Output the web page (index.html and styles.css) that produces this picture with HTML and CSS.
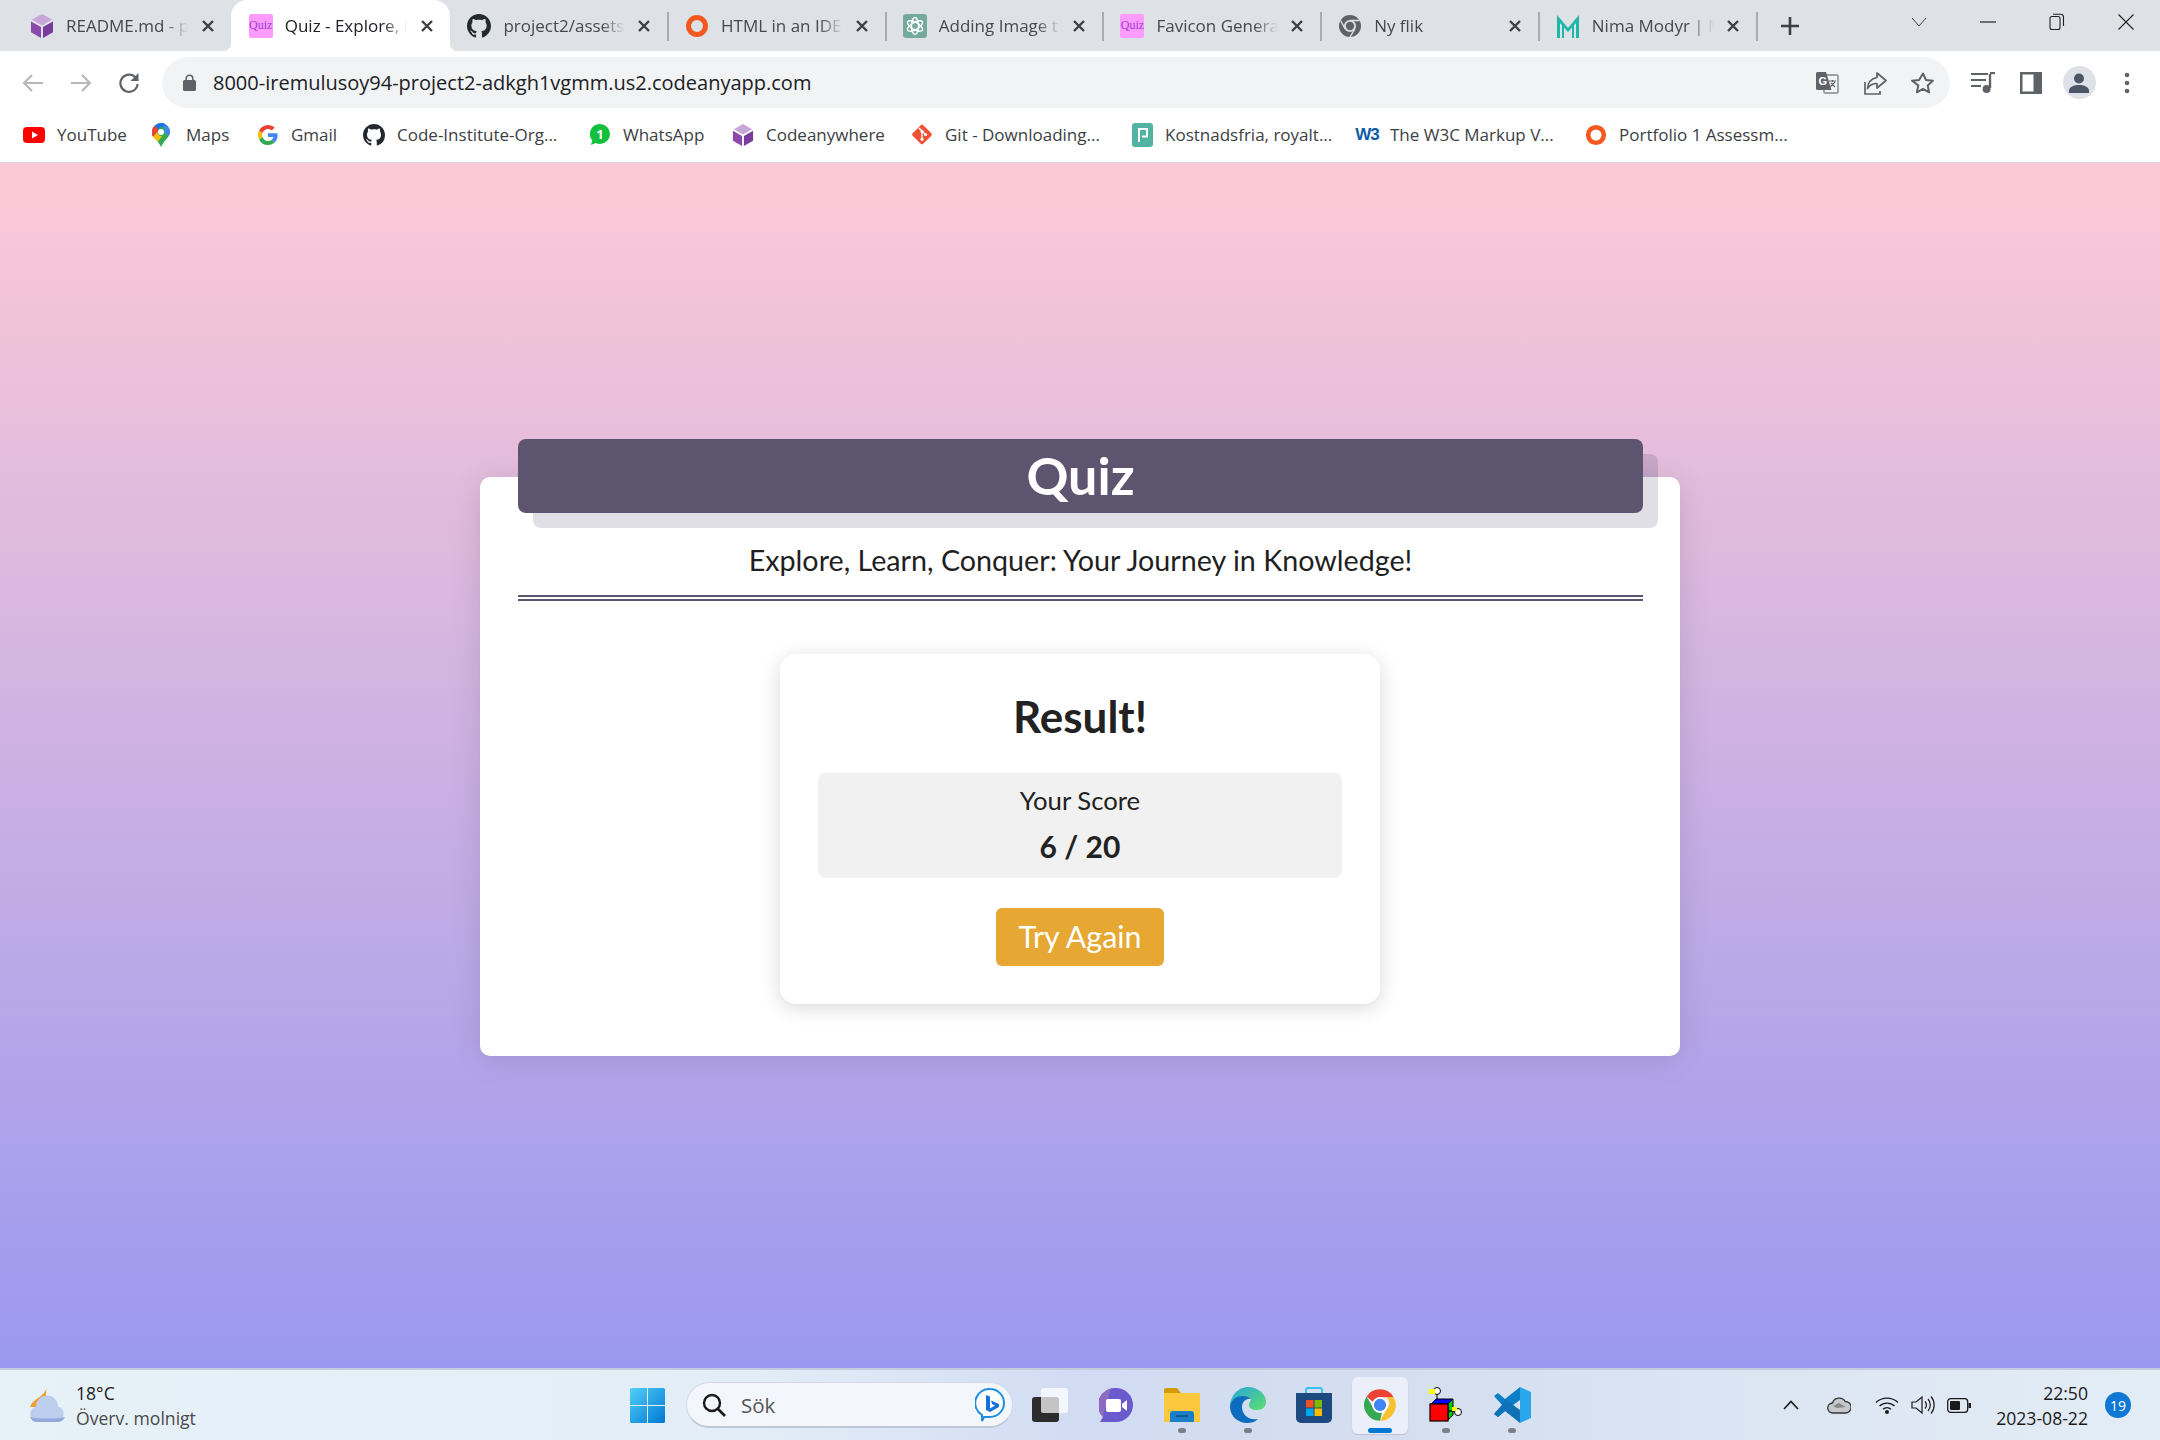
FILE: index.html
```html
<!DOCTYPE html>
<html lang="en">
<head>
    <meta charset="UTF-8">
    <meta name="viewport" content="width=device-width, initial-scale=1.0">
    <title>Quiz - Explore, Learn, Conquer</title>
    <link rel="stylesheet" href="styles.css">
</head>
<body>
    <svg class="defs" width="0" height="0">
        <symbol id="cube" viewBox="0 0 24 24">
            <polygon points="12,0 22,5.6 12,11.4 2,5.6" fill="#c9a6d9"/>
            <polygon points="1,7.4 11,13 11,24 1,18.2" fill="#8b4aa9"/>
            <polygon points="23,7.4 13,13 13,24 23,18.2" fill="#783c9c"/>
        </symbol>
        <symbol id="github" viewBox="0 0 16 16">
            <path fill="#24292f" d="M8 0C3.58 0 0 3.58 0 8c0 3.54 2.29 6.53 5.47 7.59.4.07.55-.17.55-.38 0-.19-.01-.82-.01-1.49-2.01.37-2.53-.49-2.69-.94-.09-.23-.48-.94-.82-1.13-.28-.15-.68-.52-.01-.53.63-.01 1.08.58 1.23.82.72 1.21 1.87.87 2.33.66.07-.52.28-.87.51-1.07-1.78-.2-3.64-.89-3.64-3.95 0-.87.31-1.59.82-2.15-.08-.2-.36-1.02.08-2.12 0 0 .67-.21 2.2.82.64-.18 1.32-.27 2-.27.68 0 1.36.09 2 .27 1.53-1.04 2.2-.82 2.2-.82.44 1.1.16 1.92.08 2.12.51.56.82 1.27.82 2.15 0 3.07-1.87 3.75-3.65 3.95.29.25.54.73.54 1.48 0 1.07-.01 1.93-.01 2.2 0 .21.15.46.55.38A8.013 8.013 0 0016 8c0-4.42-3.58-8-8-8z"/>
        </symbol>
        <symbol id="ring" viewBox="0 0 24 24">
            <circle cx="12" cy="12" r="8.5" fill="none" stroke="#f4581f" stroke-width="5"/>
        </symbol>
        <symbol id="close" viewBox="0 0 16 16">
            <path d="M3 3l10 10M13 3L3 13" stroke="#3c4043" stroke-width="2.4" fill="none"/>
        </symbol>
        <symbol id="chromelogo" viewBox="0 0 48 48">
            <path d="M24 3a21 21 0 0 1 18.2 10.5H24a10.5 10.5 0 0 0-9.6 6.3L6.2 12.5A21 21 0 0 1 24 3z" fill="#ea4335"/>
            <path d="M42.2 13.5A21 21 0 0 1 24 45l9.3-15.8a10.5 10.5 0 0 0-.6-15.7z" fill="#fbc02d"/>
            <path d="M6.2 12.5l9.2 16a10.5 10.5 0 0 0 11.4 5.1L24 45A21 21 0 0 1 6.2 12.5z" fill="#34a853"/>
            <circle cx="24" cy="24" r="10.5" fill="#fff"/>
            <circle cx="24" cy="24" r="8.2" fill="#4285f4"/>
        </symbol>
    </svg>

    <div class="tabstrip">
        <div class="tab">
            <svg class="favicon" width="24" height="24"><use href="#cube"/></svg>
            <span class="tab-title">README.md - p</span>
            <svg class="tab-close" width="16" height="16"><use href="#close"/></svg>
        </div>
        <div class="tab active">
            <span class="favicon quiz-icon">Quiz</span>
            <span class="tab-title">Quiz - Explore, l</span>
            <svg class="tab-close" width="16" height="16"><use href="#close"/></svg>
        </div>
        <div class="tab sep">
            <svg class="favicon" width="24" height="24"><use href="#github"/></svg>
            <span class="tab-title">project2/assets</span>
            <svg class="tab-close" width="16" height="16"><use href="#close"/></svg>
        </div>
        <div class="tab sep">
            <svg class="favicon" width="24" height="24"><use href="#ring"/></svg>
            <span class="tab-title">HTML in an IDE</span>
            <svg class="tab-close" width="16" height="16"><use href="#close"/></svg>
        </div>
        <div class="tab sep">
            <svg class="favicon" width="24" height="24" viewBox="0 0 24 24">
                <rect width="24" height="24" rx="3" fill="#74aa9c"/>
                <g fill="none" stroke="#fff" stroke-width="1.4">
                    <ellipse cx="12" cy="12" rx="3.6" ry="8.5"/>
                    <ellipse cx="12" cy="12" rx="3.6" ry="8.5" transform="rotate(60 12 12)"/>
                    <ellipse cx="12" cy="12" rx="3.6" ry="8.5" transform="rotate(120 12 12)"/>
                </g>
            </svg>
            <span class="tab-title">Adding Image t</span>
            <svg class="tab-close" width="16" height="16"><use href="#close"/></svg>
        </div>
        <div class="tab sep">
            <span class="favicon quiz-icon">Quiz</span>
            <span class="tab-title">Favicon Genera</span>
            <svg class="tab-close" width="16" height="16"><use href="#close"/></svg>
        </div>
        <div class="tab sep">
            <svg class="favicon" width="24" height="24" viewBox="0 0 24 24">
                <circle cx="12" cy="12" r="11" fill="#5f6368"/>
                <path d="M12 6.5h9.5M16.8 15L12 23M7.2 15L2.5 6.5" stroke="#dee1e6" stroke-width="1.4"/>
                <circle cx="12" cy="12" r="6" fill="#dee1e6"/>
                <circle cx="12" cy="12" r="4.2" fill="#5f6368"/>
            </svg>
            <span class="tab-title">Ny flik</span>
            <svg class="tab-close" width="16" height="16"><use href="#close"/></svg>
        </div>
        <div class="tab sep">
            <svg class="favicon" width="24" height="24" viewBox="0 0 24 24">
                <path d="M1 24V1l11 13L23 1v23h-3V9l-8 9-8-9v15z" fill="#1cb8a5"/>
                <path d="M7 24V11M17 24V11" stroke="#1cb8a5" stroke-width="2"/>
            </svg>
            <span class="tab-title">Nima Modyr | M</span>
            <svg class="tab-close" width="16" height="16"><use href="#close"/></svg>
        </div>
        <div class="new-tab">
            <svg width="18" height="18" viewBox="0 0 18 18"><path d="M9 0v18M0 9h18" stroke="#3c4043" stroke-width="2.6"/></svg>
        </div>
        <div class="win-chevron">
            <svg width="16" height="10" viewBox="0 0 16 10"><path d="M1 1l7 8 7-8" fill="none" stroke="#3c4043"/></svg>
        </div>
        <div class="win-btn">
            <svg width="16" height="2" viewBox="0 0 16 2"><path d="M0 1h16" stroke="#222" stroke-width="1.2"/></svg>
        </div>
        <div class="win-btn">
            <svg width="16" height="18" viewBox="0 0 16 18"><rect x="1" y="3.5" width="10" height="13" rx="2" fill="none" stroke="#222" stroke-width="1.1"/><path d="M4 1.2h7.5A3 3 0 0 1 14.5 4v9" fill="none" stroke="#222" stroke-width="1.1"/></svg>
        </div>
        <div class="win-btn">
            <svg width="16" height="16" viewBox="0 0 16 16"><path d="M.5.5l15 15M15.5.5l-15 15" stroke="#222" stroke-width="1.1"/></svg>
        </div>
    </div>

    <div class="toolbar">
        <div class="tool-btn">
            <svg width="22" height="20" viewBox="0 0 22 20"><path d="M21 10H3M10 2l-8 8 8 8" fill="none" stroke="#b6b8bb" stroke-width="2.2"/></svg>
        </div>
        <div class="tool-btn">
            <svg width="22" height="20" viewBox="0 0 22 20"><path d="M1 10h18M12 2l8 8-8 8" fill="none" stroke="#b6b8bb" stroke-width="2.2"/></svg>
        </div>
        <div class="tool-btn">
            <svg width="22" height="22" viewBox="0 0 22 22"><path d="M18.2 6.5A8.6 8.6 0 1 0 19.6 12" fill="none" stroke="#5f6368" stroke-width="2.2"/><path d="M20.5 1v8h-8z" fill="#5f6368"/></svg>
        </div>
        <div class="omnibox">
            <svg class="lock" width="13" height="17" viewBox="0 0 13 17"><path d="M3.2 7V4.6a3.3 3.3 0 0 1 6.6 0V7" fill="none" stroke="#5f6368" stroke-width="1.6"/><rect y="6" width="13" height="11" rx="1.6" fill="#5f6368"/></svg>
            <span class="url">8000-iremulusoy94-project2-adkgh1vgmm.us2.codeanyapp.com</span>
            <div class="omni-actions">
                <div class="tool-btn">
                    <svg width="24" height="24" viewBox="0 0 24 24"><rect x="9" y="4" width="14" height="18" rx="1" fill="#f1f3f4" stroke="#80868b" stroke-width="1.4"/><path d="M1 2.5A1.5 1.5 0 0 1 2.5 1H11l5.5 18H2.5A1.5 1.5 0 0 1 1 17.5z" fill="#5f6368"/><text x="3.5" y="14" class="g-letter">G</text><path d="M14 10h7M17.5 9v2M15 16l5-5M16 12l4 4" stroke="#5f6368" stroke-width="1.1"/></svg>
                </div>
                <div class="tool-btn">
                    <svg width="24" height="24" viewBox="0 0 24 24"><path d="M2 11v12h15v-3" fill="none" stroke="#5f6368" stroke-width="1.7"/><path d="M14 2l9 7.5-9 7.5v-4.5c-4 0-7 1-9.5 5 .5-6 4-10 9.5-11z" fill="none" stroke="#5f6368" stroke-width="1.7" stroke-linejoin="round"/></svg>
                </div>
                <div class="tool-btn">
                    <svg width="24" height="24" viewBox="0 0 24 24"><path d="M12 2.5l2.9 6.4 7 .8-5.2 4.7 1.4 6.9-6.1-3.5-6.1 3.5 1.4-6.9L1.1 9.7l7-.8z" fill="none" stroke="#5f6368" stroke-width="2" stroke-linejoin="round"/></svg>
                </div>
            </div>
        </div>
        <div class="tool-btn">
            <svg width="24" height="22" viewBox="0 0 24 22"><path d="M0 2h17M0 8h15M0 14h10" stroke="#5f6368" stroke-width="2.2"/><path d="M19 2v14" stroke="#5f6368" stroke-width="2.4"/><path d="M19 1h5" stroke="#5f6368" stroke-width="2.4"/><circle cx="15.6" cy="17" r="4" fill="#5f6368"/></svg>
        </div>
        <div class="tool-btn">
            <svg width="22" height="22" viewBox="0 0 22 22"><path d="M0 0h22v22H0z" fill="#5f6368"/><path d="M2.5 2.5h11v17h-11z" fill="#fff"/></svg>
        </div>
        <div class="tool-btn">
            <div class="avatar">
                <svg width="20" height="20" viewBox="0 0 20 20"><circle cx="10" cy="5.5" r="5" fill="#4a5568"/><path d="M0 20v-2.5C0 14 5 12 10 12s10 2 10 5.500V20z" fill="#4a5568"/></svg>
            </div>
        </div>
        <div class="tool-btn">
            <svg width="6" height="22" viewBox="0 0 6 22"><circle cx="3" cy="3" r="2.300" fill="#5f6368"/><circle cx="3" cy="11" r="2.300" fill="#5f6368"/><circle cx="3" cy="19" r="2.300" fill="#5f6368"/></svg>
        </div>
    </div>

    <div class="bookmarks">
        <div class="bookmark">
            <span class="mark-icon"><svg width="22" height="16" viewBox="0 0 22 16"><rect width="22" height="16" rx="4" fill="#f00"/><path d="M9 4.500l6 3.500-6 3.500z" fill="#fff"/></svg></span>
            <span>YouTube</span>
        </div>
        <div class="bookmark">
            <span class="mark-icon maps"><svg width="18" height="24" viewBox="0 0 18 24"><path d="M9 0a9 9 0 0 1 9 9c0 4-4 7-6 10-1 1.500-2 3-3 5-1-2-2-3.500-3-5C4 16 0 13 0 9a9 9 0 0 1 9-9z" fill="#34a853"/><path d="M9 0a9 9 0 0 1 9 9c0 1.500-.5 2.800-1.300 4L12 9a3 3 0 0 0-1-5l2.500-2.800A9 9 0 0 0 9 0z" fill="#4285f4"/><path d="M9 0a9 9 0 0 0-6.500 2.800L6.800 7A3 3 0 0 1 11 4l2.500-2.800A9 9 0 0 0 9 0z" fill="#1a73e8"/><path d="M2.500 2.800A9 9 0 0 0 1 14l5.800-7z" fill="#ea4335"/><path d="M1 14l5.800-7A3 3 0 0 0 11 12l-4.800 6.500C4.500 16.500 2.200 15.500 1 14z" fill="#fbbc04"/><circle cx="9" cy="9" r="3" fill="#fff"/></svg></span>
            <span>Maps</span>
        </div>
        <div class="bookmark">
            <span class="mark-icon"><svg width="20" height="20" viewBox="0 0 20 20"><path d="M19.600 10.200c0-.7-.1-1.300-.2-2H10v3.800h5.400a4.600 4.600 0 0 1-2 3l3.200 2.500c1.900-1.700 3-4.300 3-7.300z" fill="#4285f4"/><path d="M10 20c2.700 0 4.900-.9 6.600-2.500l-3.200-2.500c-.9.600-2 1-3.400 1-2.600 0-4.800-1.800-5.600-4.100L1.100 14.400A10 10 0 0 0 10 20z" fill="#34a853"/><path d="M4.400 11.900a6 6 0 0 1 0-3.800L1.100 5.600a10 10 0 0 0 0 8.800z" fill="#fbbc05"/><path d="M10 4c1.500 0 2.800.5 3.800 1.500l2.900-2.900A10 10 0 0 0 1.100 5.600l3.300 2.500C5.200 5.800 7.400 4 10 4z" fill="#ea4335"/></svg></span>
            <span>Gmail</span>
        </div>
        <div class="bookmark">
            <span class="mark-icon"><svg width="24" height="24"><use href="#github"/></svg></span>
            <span>Code-Institute-Org...</span>
        </div>
        <div class="bookmark">
            <span class="mark-icon"><svg width="20" height="22" viewBox="0 0 20 22"><path d="M10 0a10 10 0 0 1 0 20c-1.500 0-3-.4-4.300-1L1 21l1.300-4.500A10 10 0 0 1 10 0z" fill="#13c13e"/><text x="10" y="15" class="wa-num">1</text></svg></span>
            <span>WhatsApp</span>
        </div>
        <div class="bookmark">
            <span class="mark-icon"><svg width="24" height="24"><use href="#cube"/></svg></span>
            <span>Codeanywhere</span>
        </div>
        <div class="bookmark">
            <span class="mark-icon"><svg width="25" height="25" viewBox="0 0 25 25"><rect x="4" y="4" width="17" height="17" rx="2" transform="rotate(45 12.500 12.500)" fill="#f05133"/><path d="M9 5l7 7M12.500 9v9" stroke="#fff" stroke-width="1.600"/><circle cx="12.500" cy="9" r="1.800" fill="#fff"/><circle cx="12.500" cy="18" r="1.800" fill="#fff"/><circle cx="16.500" cy="12.500" r="1.800" fill="#fff"/></svg></span>
            <span>Git - Downloading...</span>
        </div>
        <div class="bookmark">
            <span class="mark-icon"><svg width="21" height="24" viewBox="0 0 21 24"><rect width="21" height="24" rx="3" fill="#52b3a2"/><path d="M7 19V6h8v7.500h-5" fill="none" stroke="#fff" stroke-width="2"/></svg></span>
            <span>Kostnadsfria, royalt...</span>
        </div>
        <div class="bookmark">
            <span class="mark-icon w3">W3</span>
            <span>The W3C Markup V...</span>
        </div>
        <div class="bookmark">
            <span class="mark-icon"><svg width="24" height="24"><use href="#ring"/></svg></span>
            <span>Portfolio 1 Assessm...</span>
        </div>
    </div>

    <main class="page">
        <section class="quiz-card">
            <header class="quiz-header">
                <h1>Quiz</h1>
            </header>
            <p class="tagline">Explore, Learn, Conquer: Your Journey in Knowledge!</p>
            <div class="result-card">
                <h2>Result!</h2>
                <div class="score-box">
                    <p class="score-label">Your Score</p>
                    <p class="score-value">6 / 20</p>
                </div>
                <button class="retry-btn">Try Again</button>
            </div>
        </section>
    </main>

    <footer class="taskbar">
        <div class="weather">
            <svg width="37" height="35" viewBox="0 0 37 35">
                <path d="M18 0c-2 6-1 10 2 13l-8 6H1C3 11 14 10 18 0z" fill="#f0a030"/>
                <ellipse cx="19" cy="18" rx="8" ry="7" fill="#8fa6d8"/>
                <path d="M8 34a8 8 0 0 1-1-15.500 10.500 10.500 0 0 1 22 0A8 8 0 0 1 28 34z" fill="#bccdee"/>
                <path d="M1 29c8 2 27 2 35 0-2 4-4 5-8 5H8c-3 0-5-1-7-5z" fill="#94a8dc"/>
            </svg>
            <div class="weather-text">
                <span class="temp">18°C</span>
                <span class="cond">Överv. molnigt</span>
            </div>
        </div>
        <svg class="win-logo" width="35" height="35" viewBox="0 0 35 35">
            <defs>
                <linearGradient id="winblue" x1="0" y1="0" x2="1" y2="1">
                    <stop offset="0" stop-color="#52d0f5"/>
                    <stop offset="1" stop-color="#0078d4"/>
                </linearGradient>
            </defs>
            <path d="M0 1.500A1.500 1.500 0 0 1 1.500 0H17v17H0zM18 0h15.500A1.500 1.500 0 0 1 35 1.500V17H18zM0 18h17v17H1.500A1.500 1.500 0 0 1 0 33.500zM18 18h17v15.500a1.500 1.500 0 0 1-1.500 1.500H18z" fill="url(#winblue)"/>
        </svg>
        <div class="search">
            <svg width="24" height="24" viewBox="0 0 24 24"><circle cx="10" cy="10" r="8" fill="none" stroke="#1a1a1a" stroke-width="2.400"/><path d="M15.500 15.500L23 23" stroke="#1a1a1a" stroke-width="2.600"/></svg>
            <span class="search-text">Sök</span>
            <svg class="bing" width="30" height="34" viewBox="0 0 30 34">
                <path d="M15 1a14 14 0 0 1 0 28H9l-2 4v-6A14 14 0 0 1 15 1z" fill="#fff" stroke="#1b8fe0" stroke-width="2"/>
                <path d="M11 7l4 1.500v12l5-3-3-1.500-1-3.500 8 3.500v3l-9 5-4-2z" fill="#1570d8"/>
            </svg>
        </div>
        <div class="tasks">
            <div class="task">
                <svg width="36" height="34" viewBox="0 0 36 34">
                    <rect y="9" width="27" height="25" rx="3" fill="#2c2c2c"/>
                    <rect x="9" y="0" width="27" height="25" rx="2" fill="#fff" fill-opacity=".72"/>
                </svg>
            </div>
            <div class="task">
                <svg width="34" height="35" viewBox="0 0 34 35">
                    <path d="M17 0a17 17 0 0 1 0 34H1l3-5A17 17 0 0 1 17 0z" fill="#6a5acd"/>
                    <path d="M17 0A17 17 0 0 0 4 29l8-29z" fill="#8c6bc0"/>
                    <rect x="7" y="11" width="15" height="13" rx="2" fill="#fff"/>
                    <path d="M23 16l5-4v11l-5-4z" fill="#fff"/>
                </svg>
            </div>
            <div class="task dotted">
                <svg width="36" height="34" viewBox="0 0 36 34">
                    <path d="M0 2a2 2 0 0 1 2-2h11l4 5H0z" fill="#d49a0a"/>
                    <path d="M0 5h35a1 1 0 0 1 1 1v28H0z" fill="#fcc93e"/>
                    <path d="M6 34V26a3 3 0 0 1 3-3h18a3 3 0 0 1 3 3v8z" fill="#1a7fc8"/>
                    <path d="M12 28h12" stroke="#0b4f8a" stroke-width="1.600"/>
                </svg>
            </div>
            <div class="task dotted">
                <svg width="36" height="36" viewBox="0 0 36 36">
                    <defs>
                        <linearGradient id="edgetop" x1="0" y1="0" x2="1" y2="1">
                            <stop offset="0" stop-color="#2aa5e0"/>
                            <stop offset="1" stop-color="#5ce06a"/>
                        </linearGradient>
                    </defs>
                    <path d="M18 0c10 0 18 7 18 15 0 5-4 8-9 8-5 0-8-2-8-5 0-3 2-4 2-6-2-2-6-2-9 0C6 15 2 17 0 20 0 9 8 0 18 0z" fill="url(#edgetop)"/>
                    <path d="M0 20C1 12 7 9 13 9c5 0 8 3 8 3-5-1-9 3-9 8 0 7 6 14 16 12-3 3-7 4-11 4C8 36 0 29 0 20z" fill="#0c6cbd"/>
                </svg>
            </div>
            <div class="task">
                <svg width="36" height="36" viewBox="0 0 36 36">
                    <path d="M10 8V3a2 2 0 0 1 2-2h12a2 2 0 0 1 2 2v5" fill="none" stroke="#3ac0f0" stroke-width="2"/>
                    <path d="M0 6h36v25a5 5 0 0 1-5 5H5a5 5 0 0 1-5-5z" fill="#1c4a80"/>
                    <rect x="10" y="13" width="7.500" height="7.500" fill="#f25022"/>
                    <rect x="18.500" y="13" width="7.500" height="7.500" fill="#7fba00"/>
                    <rect x="10" y="21.500" width="7.500" height="7.500" fill="#00a4ef"/>
                    <rect x="18.500" y="21.500" width="7.500" height="7.500" fill="#ffb900"/>
                </svg>
            </div>
            <div class="task running">
                <svg width="36" height="36"><use href="#chromelogo"/></svg>
            </div>
            <div class="task dotted">
                <svg width="34" height="36" viewBox="0 0 34 36">
                    <path d="M8 4v12" stroke="#000" stroke-width="1"/>
                    <circle cx="8" cy="4" r="3.500" fill="#fff" stroke="#000" stroke-width="1"/>
                    <path d="M0 2h6v5H0z" fill="#ff0"/>
                    <path d="M2 17l5-5h17l-5 5z" fill="#00f" stroke="#000"/>
                    <path d="M19 17l5-5v16l-5 5z" fill="#0c0" stroke="#000"/>
                    <rect x="1" y="17" width="18" height="17" fill="#f00" stroke="#000" stroke-width="1.200"/>
                    <path d="M20 24h7" stroke="#000" stroke-width="1.500"/>
                    <circle cx="29" cy="25" r="3.500" fill="#fff" stroke="#000" stroke-width="1"/>
                    <path d="M23 20h5v4h-5z" fill="#ff0"/>
                </svg>
            </div>
            <div class="task dotted">
                <svg width="37" height="36" viewBox="0 0 37 36">
                    <path d="M26 0l11 5v26l-11 5z" fill="#2aa6ea"/>
                    <path d="M26 0v13L11 24l-7 6-4-3 8-9-8-9 4-3 7 6z" fill="#0a7fc8"/>
                    <path d="M37 5L26 13v10l11 8" fill="#2aa6ea"/>
                    <path d="M11 12l15 11v13L11 24 4 30l-4-3 8-9z" fill="#0e71b8"/>
                </svg>
            </div>
        </div>
        <div class="tray">
            <div class="tray-icon caret">
                <svg width="16" height="10" viewBox="0 0 16 10"><path d="M1 9l7-7.500L15 9" fill="none" stroke="#1a1a1a" stroke-width="1.600"/></svg>
            </div>
            <div class="tray-icon cloud">
                <svg width="24" height="17" viewBox="0 0 24 17"><path d="M6 16a5 5 0 0 1-.5-10 7 7 0 0 1 12.700-1.500A5.500 5.500 0 0 1 18.500 16z" fill="#c6c8cc" stroke="#333" stroke-width="1.300"/><path d="M6 9l6-3 7 4-9 1z" fill="#888"/></svg>
            </div>
            <div class="tray-icon">
                <svg width="24" height="18" viewBox="0 0 24 18"><path d="M1 6.500a16 16 0 0 1 22 0M4.500 10a11 11 0 0 1 15 0M8 13.300a6 6 0 0 1 8 0" fill="none" stroke="#1a1a1a" stroke-width="1.300"/><circle cx="12" cy="16" r="2" fill="#1a1a1a"/></svg>
            </div>
            <div class="tray-icon">
                <svg width="24" height="20" viewBox="0 0 24 20"><path d="M1 7h4l6-5v16l-6-5H1z" fill="none" stroke="#1a1a1a" stroke-width="1.200"/><path d="M14 6.500a5 5 0 0 1 0 7M17 4a9 9 0 0 1 0 12M20 1.500a13 13 0 0 1 0 17" fill="none" stroke="#1a1a1a" stroke-width="1.200"/></svg>
            </div>
            <div class="tray-icon">
                <svg width="24" height="15" viewBox="0 0 24 15"><rect x=".7" y=".7" width="20" height="13.600" rx="3" fill="none" stroke="#1a1a1a" stroke-width="1.300"/><rect x="3" y="3" width="10" height="9" rx="1" fill="#1a1a1a"/><rect x="21.500" y="5" width="2.500" height="5" fill="#1a1a1a"/></svg>
            </div>
            <div class="clock">
                <span>22:50</span>
                <span>2023-08-22</span>
            </div>
            <div class="badge">19</div>
        </div>
    </footer>
</body>
</html>
```

FILE: styles.css
```css
* {
    box-sizing: border-box;
}
html, body {
    margin: 0;
    padding: 0;
}
body {
    display: flex;
    flex-direction: column;
    width: 2160px;
    height: 1440px;
    overflow: hidden;
    font-family: "Open Sans", "Noto Sans", sans-serif;
    color: #202124;
    background: #fff;
}
.defs {
    display: block;
    height: 0;
}

/* browser tabs */
.tabstrip {
    display: flex;
    align-items: center;
    height: 51px;
    flex: none;
    padding-left: 13px;
    background: #dee1e6;
}
.tab {
    position: relative;
    display: flex;
    align-items: center;
    gap: 12px;
    width: 217.7px;
    height: 51px;
    flex: none;
    padding: 0 14px 0 19px;
    font-size: 17px;
    color: #45494e;
}
.tab:first-child {
    padding: 0 15px 0 17px;
}
.tab.sep::after {
    content: "";
    position: absolute;
    right: -3px;
    top: 12px;
    width: 2px;
    height: 29px;
    background: #a9adb2;
}
.tab.active {
    width: 219.7px;
    margin-right: -2px;
    padding: 0 15px 0 18px;
    color: #202124;
    background: #fff;
    border-radius: 16px 16px 0 0;
}
.tab.active::before,
.tab.active::after {
    content: "";
    position: absolute;
    bottom: 0;
    width: 8px;
    height: 8px;
}
.tab.active::before {
    left: -8px;
    background: radial-gradient(circle at 0 0, transparent 8px, #fff 8.5px);
}
.tab.active::after {
    right: -8px;
    background: radial-gradient(circle at 100% 0, transparent 8px, #fff 8.5px);
}
.favicon {
    flex: none;
}
.quiz-icon {
    display: flex;
    align-items: center;
    justify-content: center;
    width: 24px;
    height: 24px;
    border-radius: 2px;
    background: #fd9bff;
    color: #9a3fd0;
    font-family: "Liberation Serif", serif;
    font-size: 12px;
}
.tab-title {
    flex: 1;
    min-width: 0;
    overflow: hidden;
    white-space: nowrap;
    -webkit-mask-image: linear-gradient(to right, #000 98px, transparent 122px);
    mask-image: linear-gradient(to right, #000 98px, transparent 122px);
}
.tab-close {
    flex: none;
    margin-left: -12px;
}
.new-tab {
    display: flex;
    justify-content: center;
    width: 34px;
    margin-left: 18px;
}
.win-chevron {
    display: flex;
    justify-content: center;
    width: 34px;
    margin-left: auto;
    margin-right: 17px;
    margin-bottom: 8px;
}
.win-btn {
    display: flex;
    justify-content: center;
    align-items: center;
    width: 69px;
    margin-bottom: 8px;
}

/* address bar */
.toolbar {
    display: flex;
    align-items: center;
    height: 57px;
    flex: none;
    padding: 6px 9px 0;
    background: #fff;
}
.tool-btn {
    display: flex;
    align-items: center;
    justify-content: center;
    width: 48px;
    height: 48px;
    flex: none;
}
.omnibox {
    display: flex;
    align-items: center;
    width: 1788px;
    height: 51px;
    flex: none;
    margin: 0 9px;
    padding: 0 3px 0 21px;
    background: #f1f3f4;
    border-radius: 26px;
}
.lock {
    flex: none;
    margin-right: 17px;
}
.url {
    font-size: 20px;
    color: #202124;
}
.omni-actions {
    display: flex;
    margin-left: auto;
}
.g-letter {
    font-family: "Liberation Sans", sans-serif;
    font-size: 11px;
    font-weight: 700;
    fill: #fff;
}
.avatar {
    display: flex;
    align-items: center;
    justify-content: center;
    width: 33px;
    height: 33px;
    border-radius: 50%;
    background: #dee1e6;
}

/* bookmarks */
.bookmarks {
    display: grid;
    grid-template-columns: 129px 105px 106px 226px 143px 179px 220px 225px 229px 1fr;
    align-items: center;
    height: 55px;
    flex: none;
    padding: 0 0 1px 23px;
    border-bottom: 1px solid #d9dadd;
    font-size: 17px;
    color: #3c4043;
    background: #fff;
}
.bookmark {
    display: flex;
    align-items: center;
    gap: 12px;
    white-space: nowrap;
}
.mark-icon {
    display: flex;
    align-items: center;
    justify-content: center;
    width: 22px;
    height: 26px;
    flex: none;
}
.mark-icon.maps {
    justify-content: flex-start;
}
.wa-num {
    font-size: 13px;
    font-weight: 700;
    text-anchor: middle;
    fill: #fff;
}
.w3 {
    font-family: "Liberation Sans", sans-serif;
    font-size: 17px;
    font-weight: 700;
    letter-spacing: -1px;
    color: #0d5aa7;
}

/* quiz */
.page {
    flex: 1;
    display: flex;
    justify-content: center;
    align-items: flex-start;
    padding-top: 314px;
    background: linear-gradient(to bottom, #fdc9d6, #9a98f0);
}
.quiz-card {
    width: 1200px;
    height: 579px;
    padding: 0 38px;
    background: #fff;
    border-radius: 10px;
    box-shadow: 0 4px 30px rgba(0, 0, 0, 0.12);
    font-family: Lato, "Open Sans", sans-serif;
}
.quiz-header {
    height: 74px;
    margin-top: -38px;
    margin-right: -1px;
    background: #5d5470;
    border-radius: 8px;
    box-shadow: 15px 15px 0 rgba(40, 40, 80, 0.15);
}
.quiz-header h1 {
    margin: 0;
    font-size: 52px;
    font-weight: 700;
    line-height: 72px;
    text-align: center;
    color: #fff;
}
.tagline {
    margin: 0 -1px 53px 0;
    padding: 30px 0 18px;
    font-size: 28.7px;
    line-height: 34px;
    text-align: center;
    color: #1f1f1f;
    border-bottom: 6px double #5d5470;
}
.result-card {
    display: flex;
    flex-direction: column;
    align-items: center;
    width: 600px;
    height: 350px;
    margin: 0 auto;
    padding: 38px;
    border-radius: 16px;
    background: #fff;
    box-shadow: 0 4px 20px rgba(0, 0, 0, 0.15);
}
.result-card h2 {
    margin: 0 0 31px;
    font-size: 44px;
    font-weight: 700;
    line-height: 48px;
    padding-bottom: 2px;
    color: #222;
}
.score-box {
    width: 100%;
    height: 105px;
    padding-top: 13px;
    background: #f1f1f1;
    border-radius: 8px;
    text-align: center;
}
.score-box p {
    margin: 0;
    color: #222;
}
.score-label {
    font-size: 25.7px;
    line-height: 28px;
}
.score-box .score-value {
    margin-top: 15px;
    font-size: 30px;
    font-weight: 700;
    line-height: 34px;
}
.retry-btn {
    width: 168px;
    height: 58px;
    margin-top: 30px;
    padding: 0 0 2px;
    border: 0;
    border-radius: 6px;
    background: #e6a832;
    color: #fff;
    font-family: inherit;
    font-size: 30.4px;
}

/* windows taskbar */
.taskbar {
    display: flex;
    align-items: center;
    height: 72px;
    flex: none;
    padding: 0 29px;
    border-top: 2px solid #c3cbdc;
    background: linear-gradient(to right, #e7f1f8 0%, #e3edf7 35%, #d1dcf3 50%, #d5deef 65%, #e3edf6 100%);
}
.weather {
    display: flex;
    align-items: center;
    gap: 10px;
    width: 601px;
    flex: none;
}
.weather-text {
    display: flex;
    flex-direction: column;
    gap: 5px;
    font-size: 17.6px;
    line-height: 20px;
}
.temp {
    color: #1a1a1a;
}
.cond {
    color: #4a4a4a;
}
.win-logo {
    flex: none;
    margin-right: 21px;
}
.search {
    display: flex;
    align-items: center;
    width: 327px;
    height: 46px;
    flex: none;
    padding: 0 7px 0 15px;
    background: #f3f6fd;
    border: 1px solid #d3d9e6;
    border-bottom: 2px solid #bfc6d6;
    border-radius: 23px;
}
.search-text {
    margin-left: 15px;
    font-size: 20.5px;
    color: #555;
}
.bing {
    margin-left: auto;
}
.tasks {
    display: flex;
    margin-left: 4px;
}
.task {
    position: relative;
    display: flex;
    align-items: center;
    justify-content: center;
    width: 56px;
    height: 57px;
    margin: 0 5px;
    flex: none;
}
.task.dotted::after,
.task.running::after {
    content: "";
    position: absolute;
    left: 50%;
    bottom: 1px;
    width: 8px;
    height: 5px;
    margin-left: -4px;
    border-radius: 3px;
    background: #7c8088;
}
.task.running {
    background: #eaeff9;
    border-radius: 6px;
    box-shadow: 0 1px 1px #b9c0d1;
}
.task.running::after {
    width: 24px;
    margin-left: -12px;
    background: #0078d4;
}
.tray {
    display: flex;
    align-items: center;
    margin-left: auto;
}
.tray-icon {
    display: flex;
    justify-content: center;
    width: 36px;
}
.tray-icon.caret {
    width: 24px;
    margin-right: 18px;
}
.tray-icon.cloud {
    margin-right: 12px;
}
.clock {
    display: flex;
    flex-direction: column;
    align-items: flex-end;
    gap: 5px;
    width: 111px;
    font-size: 17.6px;
    line-height: 20px;
    color: #1a1a1a;
}
.badge {
    display: flex;
    align-items: center;
    justify-content: center;
    width: 26px;
    height: 26px;
    margin-left: 17px;
    border-radius: 50%;
    background: #0f78d4;
    color: #fff;
    font-size: 14px;
}
```
